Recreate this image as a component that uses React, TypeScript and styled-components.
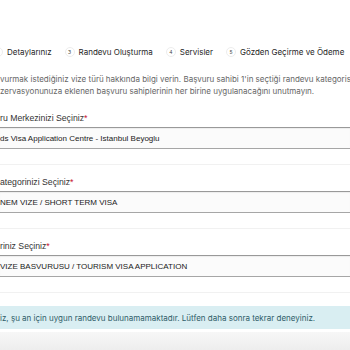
import React from 'react';
import styled, { createGlobalStyle } from 'styled-components';

const GlobalStyle = createGlobalStyle`
  html, body {
    margin: 0;
    padding: 0;
    background: #ffffff;
    overflow: hidden;
  }
`;

const Page = styled.div`
  width: 350px;
  height: 350px;
  padding-top: 40px;
  box-sizing: border-box;
  overflow: hidden;
  background: #ffffff;
`;

const StepBar = styled.div`
  display: flex;
  align-items: center;
  gap: 13px;
  height: 24px;
  margin-left: -7px;
  width: 420px;
  font-family: Inter, 'Noto Sans', sans-serif;
  font-size: 8px;
  color: #262626;
  white-space: nowrap;
`;

const Step = styled.div`
  display: flex;
  align-items: center;
  gap: 4px;
`;

const StepNum = styled.span`
  display: inline-flex;
  align-items: center;
  justify-content: center;
  box-sizing: border-box;
  width: 10px;
  height: 10px;
  border-radius: 50%;
  border: 1px solid #ededed;
  font-size: 5px;
  color: #444;
`;

const Intro = styled.p`
  margin: 9px 0 0;
  font-family: Inter, 'Noto Sans', sans-serif;
  font-size: 8px;
  line-height: 12px;
  color: #666;
  white-space: nowrap;
`;

const Form = styled.div`
  display: flex;
  flex-direction: column;
  gap: 12px;
  margin-top: 16px;
`;

const Field = styled.div`
  display: flex;
  flex-direction: column;
  gap: 4px;
  padding-bottom: 15px;
  border-bottom: 1px solid #f1f1f1;
`;

const Label = styled.label`
  font-family: 'Liberation Sans', Arial, sans-serif;
  font-size: 8.7px;
  line-height: 10px;
  color: #333;
  white-space: nowrap;
`;

const Req = styled.span`
  color: #c8102e;
`;

const Select = styled.div`
  height: 22px;
  box-sizing: border-box;
  display: flex;
  align-items: center;
  background: #fbfbfb;
  border-top: 1px solid #999;
  border-bottom: 1px solid #a6a6a6;
  box-shadow: inset 0 1px 1px rgba(0, 0, 0, 0.06);
  font-family: 'Liberation Sans', Arial, sans-serif;
  font-size: 8px;
  color: #1a1a1a;
  white-space: nowrap;
`;

const Alert = styled.div`
  margin-top: 13px;
  height: 23px;
  display: flex;
  align-items: center;
  background: #d9eef2;
  color: #2f5d68;
  font-family: Inter, 'Noto Sans', sans-serif;
  font-size: 8px;
  white-space: nowrap;
`;

const Footer = styled.div`
  margin-top: 3px;
  height: 20px;
  background: linear-gradient(#f7f7f7, #ececec);
`;

const steps = [
  { n: 2, label: 'Detaylarınız' },
  { n: 3, label: 'Randevu Oluşturma' },
  { n: 4, label: 'Servisler' },
  { n: 5, label: 'Gözden Geçirme ve Ödeme' },
];

const fields = [
  { label: 'ru Merkezinizi Seçiniz', value: 'ds Visa Application Centre - Istanbul Beyoglu' },
  { label: 'ategorinizi Seçiniz', value: 'NEM VIZE / SHORT TERM VISA' },
  { label: 'riniz Seçiniz', value: 'VIZE BASVURUSU / TOURISM VISA APPLICATION' },
];

export default function App() {
  return (
    <Page>
      <GlobalStyle />
      <StepBar>
        {steps.map((s) => (
          <Step key={s.n}>
            <StepNum>{s.n}</StepNum>
            {s.label}
          </Step>
        ))}
      </StepBar>
      <Intro>
        vurmak istediğiniz vize türü hakkında bilgi verin. Başvuru sahibi 1'in seçtiği randevu kategorisinin
        <br />
        zervasyonunuza eklenen başvuru sahiplerinin her birine uygulanacağını unutmayın.
      </Intro>
      <Form>
        {fields.map((f) => (
          <Field key={f.label}>
            <Label>
              {f.label}
              <Req>*</Req>
            </Label>
            <Select>{f.value}</Select>
          </Field>
        ))}
      </Form>
      <Alert>iz, şu an için uygun randevu bulunamamaktadır. Lütfen daha sonra tekrar deneyiniz.</Alert>
      <Footer />
    </Page>
  );
}
